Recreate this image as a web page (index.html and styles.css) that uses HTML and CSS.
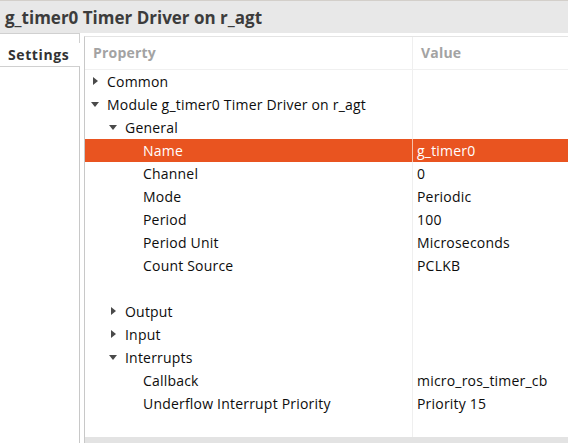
FILE: index.html
```html
<!DOCTYPE html>
<html>
<head>
<meta charset="utf-8">
<link rel="stylesheet" href="styles.css">
</head>
<body>
<div class="titlebar"><span class="title">g_timer0 Timer Driver on r_agt</span></div>
<div class="main">
  <div class="tabs">
    <div class="tab-top"></div>
    <div class="tab">Settings</div>
    <div class="tab-rest"></div>
  </div>
  <div class="gap"></div>
  <div class="table">
    <div class="row header">
      <div class="prop"><span class="htext">Property</span></div>
      <div class="val"><span class="htext">Value</span></div>
    </div>
    <div class="row"><div class="prop l0"><span class="arrow right"></span>Common</div><div class="val"></div></div>
    <div class="row"><div class="prop l0"><span class="arrow down"></span>Module g_timer0 Timer Driver on r_agt</div><div class="val"></div></div>
    <div class="row"><div class="prop l1"><span class="arrow down"></span>General</div><div class="val"></div></div>
    <div class="row selected"><div class="prop l2">Name</div><div class="val">g_timer0</div></div>
    <div class="row"><div class="prop l2">Channel</div><div class="val">0</div></div>
    <div class="row"><div class="prop l2">Mode</div><div class="val">Periodic</div></div>
    <div class="row"><div class="prop l2">Period</div><div class="val">100</div></div>
    <div class="row"><div class="prop l2">Period Unit</div><div class="val">Microseconds</div></div>
    <div class="row"><div class="prop l2">Count Source</div><div class="val">PCLKB</div></div>
    <div class="row"><div class="prop l2"></div><div class="val"></div></div>
    <div class="row"><div class="prop l1"><span class="arrow right"></span>Output</div><div class="val"></div></div>
    <div class="row"><div class="prop l1"><span class="arrow right"></span>Input</div><div class="val"></div></div>
    <div class="row"><div class="prop l1"><span class="arrow down"></span>Interrupts</div><div class="val"></div></div>
    <div class="row"><div class="prop l2">Callback</div><div class="val">micro_ros_timer_cb</div></div>
    <div class="row"><div class="prop l2">Underflow Interrupt Priority</div><div class="val">Priority 15</div></div>
    <div class="row filler"><div class="prop"></div><div class="val"></div></div>
    <div class="scrollbar"></div>
  </div>
</div>
</body>
</html>
```

FILE: styles.css
```css
html, body {
  margin: 0;
  padding: 0;
  height: 100%;
  background: #ffffff;
  font-family: "Open Sans", "DejaVu Sans", sans-serif;
  font-size: 14px;
  letter-spacing: 0.2px;
  color: #0d0d0d;
  overflow: hidden;
}

.titlebar {
  border-top: 1px solid #d3cfca;
  background: #e8e8e8;
  display: flex;
  align-items: center;
  padding-left: 5px;
  box-sizing: border-box;
  height: 33px;
}

.title {
  font-weight: 700;
  font-size: 17px;
  color: #3c3c3c;
  letter-spacing: 0;
}

.main {
  display: flex;
  height: 410px;
}

.tabs {
  width: 80px;
  display: flex;
  flex-direction: column;
}

.tab-top {
  height: 9px;
  border-top: 1px solid #d0d0d0;
  border-right: 1px solid #d0d0d0;
}

.tab {
  height: 23px;
  line-height: 23px;
  padding-left: 8px;
  font-weight: 700;
  letter-spacing: 0.6px;
  color: #333333;
}

.tab-rest {
  flex: 1;
  border-top: 1px solid #d0d0d0;
  border-right: 1px solid #c8c8c8;
}

.gap {
  width: 4px;
}

.table {
  flex: 1;
  margin-top: 3px;
  border-top: 1px solid #e4e4e4;
  border-left: 1px solid #c8c8c8;
  display: flex;
  flex-direction: column;
}

.row {
  display: flex;
  height: 23px;
  line-height: 23px;
  white-space: nowrap;
}

.row.header {
  height: 32px;
  line-height: 32px;
  border-bottom: 1px solid #f0f0f0;
}

.htext {
  font-weight: 700;
  color: #a3a3a3;
}

.prop {
  width: 328px;
  box-sizing: border-box;
  padding-left: 8px;
  border-right: 1px solid #efefef;
  display: flex;
  align-items: center;
}

.val {
  flex: 1;
  padding-left: 4px;
}

.header .val {
  padding-left: 8px;
}

.l0 { padding-left: 8px; }
.l1 { padding-left: 26px; }
.l2 { padding-left: 58px; }

.arrow {
  width: 14px;
  height: 23px;
  flex: none;
  position: relative;
}

.arrow.right::before {
  content: "";
  position: absolute;
  left: 0;
  top: 7px;
  border-top: 4.5px solid transparent;
  border-bottom: 4.5px solid transparent;
  border-left: 5px solid #4a4a4a;
}

.arrow.down::before {
  content: "";
  position: absolute;
  left: -2px;
  top: 9px;
  border-left: 4.5px solid transparent;
  border-right: 4.5px solid transparent;
  border-top: 5px solid #4a4a4a;
}

.selected {
  background: #e95420;
  color: #ffffff;
}

.selected .prop {
  border-right-color: #f6c0ab;
}

.filler {
  flex: 1;
  height: auto;
}

.scrollbar {
  height: 6px;
  background: #e3e3e3;
  flex: none;
}
```
